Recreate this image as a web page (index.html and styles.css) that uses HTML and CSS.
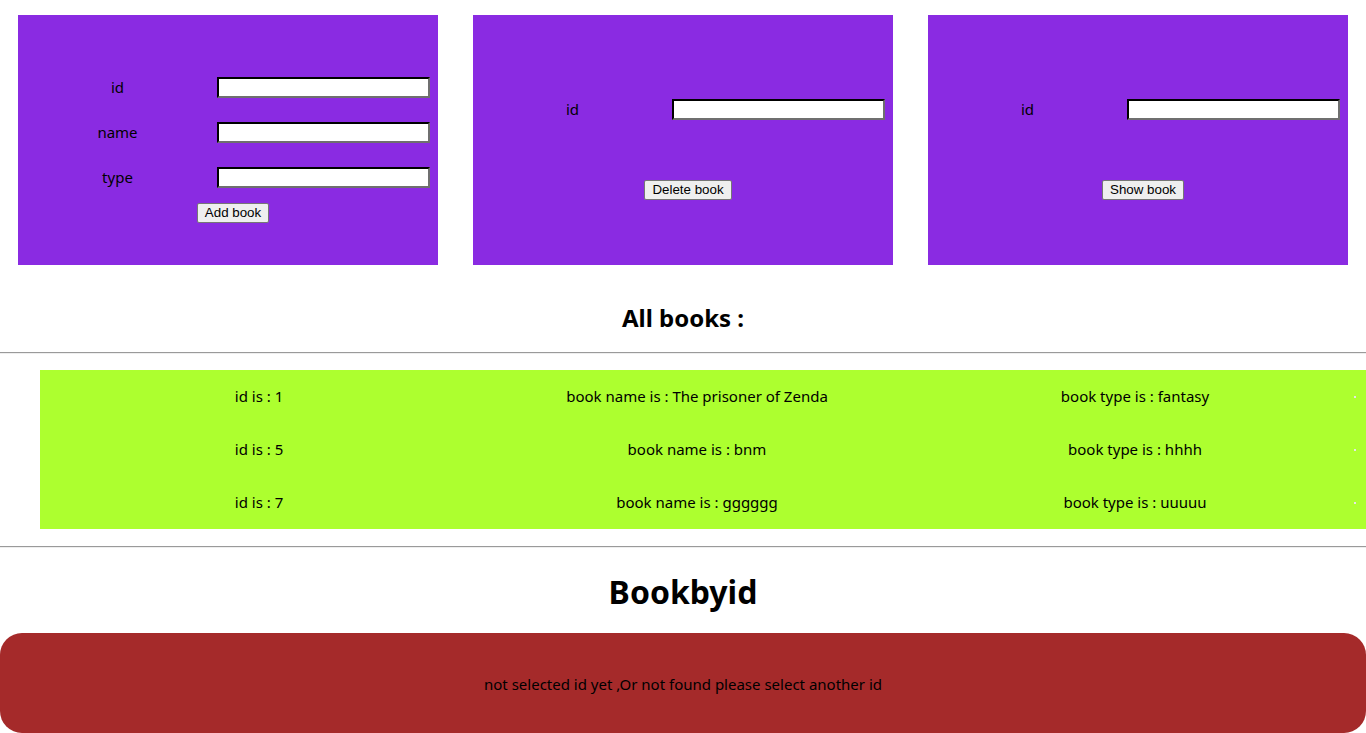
FILE: index.html
```html
<!DOCTYPE html>
<html>
<head>
<meta charset="utf-8">
<link rel="stylesheet" href="styles.css">
</head>
<body>
<div class="panels">
  <form class="panel panel-add">
    <div class="grid">
      <label class="lbl">id</label><input class="inp" type="text">
      <label class="lbl">name</label><input class="inp" type="text">
      <label class="lbl">type</label><input class="inp" type="text">
    </div>
    <div class="btnrow"><button type="button" class="btn">Add book</button></div>
  </form>
  <form class="panel panel-one">
    <div class="grid">
      <label class="lbl">id</label><input class="inp" type="text">
    </div>
    <div class="btnrow btnrow-far"><button type="button" class="btn">Delete book</button></div>
  </form>
  <form class="panel panel-one">
    <div class="grid">
      <label class="lbl">id</label><input class="inp" type="text">
    </div>
    <div class="btnrow btnrow-far"><button type="button" class="btn">Show book</button></div>
  </form>
</div>

<h2 class="title">All books :</h2>
<hr class="rule">
<div class="books">
  <div class="book"><span>id is : 1</span><span>book name is : The prisoner of Zenda</span><span>book type is : fantasy</span><i class="dot"></i></div>
  <div class="book"><span>id is : 5</span><span>book name is : bnm</span><span>book type is : hhhh</span><i class="dot"></i></div>
  <div class="book"><span>id is : 7</span><span>book name is : gggggg</span><span>book type is : uuuuu</span><i class="dot"></i></div>
</div>
<hr class="rule rule2">
<h1 class="bigtitle">Bookbyid</h1>
<div class="result">not selected id yet ,Or not found please select another id</div>
</body>
</html>
```
FILE: styles.css
```css
html, body {
  margin: 0;
  padding: 0;
}
body {
  font-family: "Noto Sans", "Open Sans", sans-serif;
  font-size: 15px;
  color: #000;
  overflow: hidden;
}
.panels {
  display: flex;
  gap: 35px;
  padding: 15px 18px 0 18px;
}
.panel {
  width: 420px;
  height: 250px;
  background: #8a2be2;
  box-sizing: border-box;
  margin: 0;
}
.panel-add { padding-top: 62px; }
.panel-one { padding-top: 84px; }
.grid {
  display: grid;
  grid-template-columns: 199px 213px;
  row-gap: 24px;
  align-items: center;
}
.lbl {
  text-align: center;
  line-height: 21px;
}
.inp {
  box-sizing: border-box;
  width: 213px;
  height: 21px;
  border: 2px inset #767676;
  border-color: #1e1e1e #6f6f6f #6f6f6f #1e1e1e;
  background: #fff;
  padding: 0 2px;
  margin: 0;
}
.btnrow {
  display: flex;
  justify-content: center;
  padding-left: 10px;
  margin-top: 15px;
}
.btnrow-far { margin-top: 60px; }
.btn {
  font-family: "Liberation Sans", Arial, sans-serif;
  font-size: 13.33px;
  height: 20px;
  padding: 0 7px;
  background: #efefef;
  border: 1px solid #767676;
  border-radius: 2px;
  color: #000;
  line-height: 18px;
}
.title {
  font-size: 24px;
  font-weight: bold;
  text-align: center;
  margin: 36px 0 0 0;
  line-height: 33px;
}
.rule {
  margin: 18px 0 0 0;
  border: 0;
  border-top: 1px solid #9a9a9a;
  border-bottom: 1px solid #eee;
  height: 0;
}
.books {
  margin: 16px 0 0 40px;
  width: 1340px;
  background: #adff2f;
}
.book {
  display: grid;
  grid-template-columns: 438px 438px 438px 4px;
  height: 53px;
  align-items: center;
}
.book span {
  text-align: center;
  line-height: 53px;
}
.dot {
  width: 2px;
  height: 2px;
  background: #e6e6e6;
}
.rule2 { margin-top: 17px; }
.bigtitle {
  font-size: 32px;
  font-weight: bold;
  text-align: center;
  margin: 22px 0 0 0;
  line-height: 44px;
}
.result {
  margin-top: 19px;
  height: 100px;
  background: #a52a2a;
  border-radius: 22px;
  display: flex;
  align-items: center;
  justify-content: center;
  padding-top: 2px;
  box-sizing: border-box;
}
```
